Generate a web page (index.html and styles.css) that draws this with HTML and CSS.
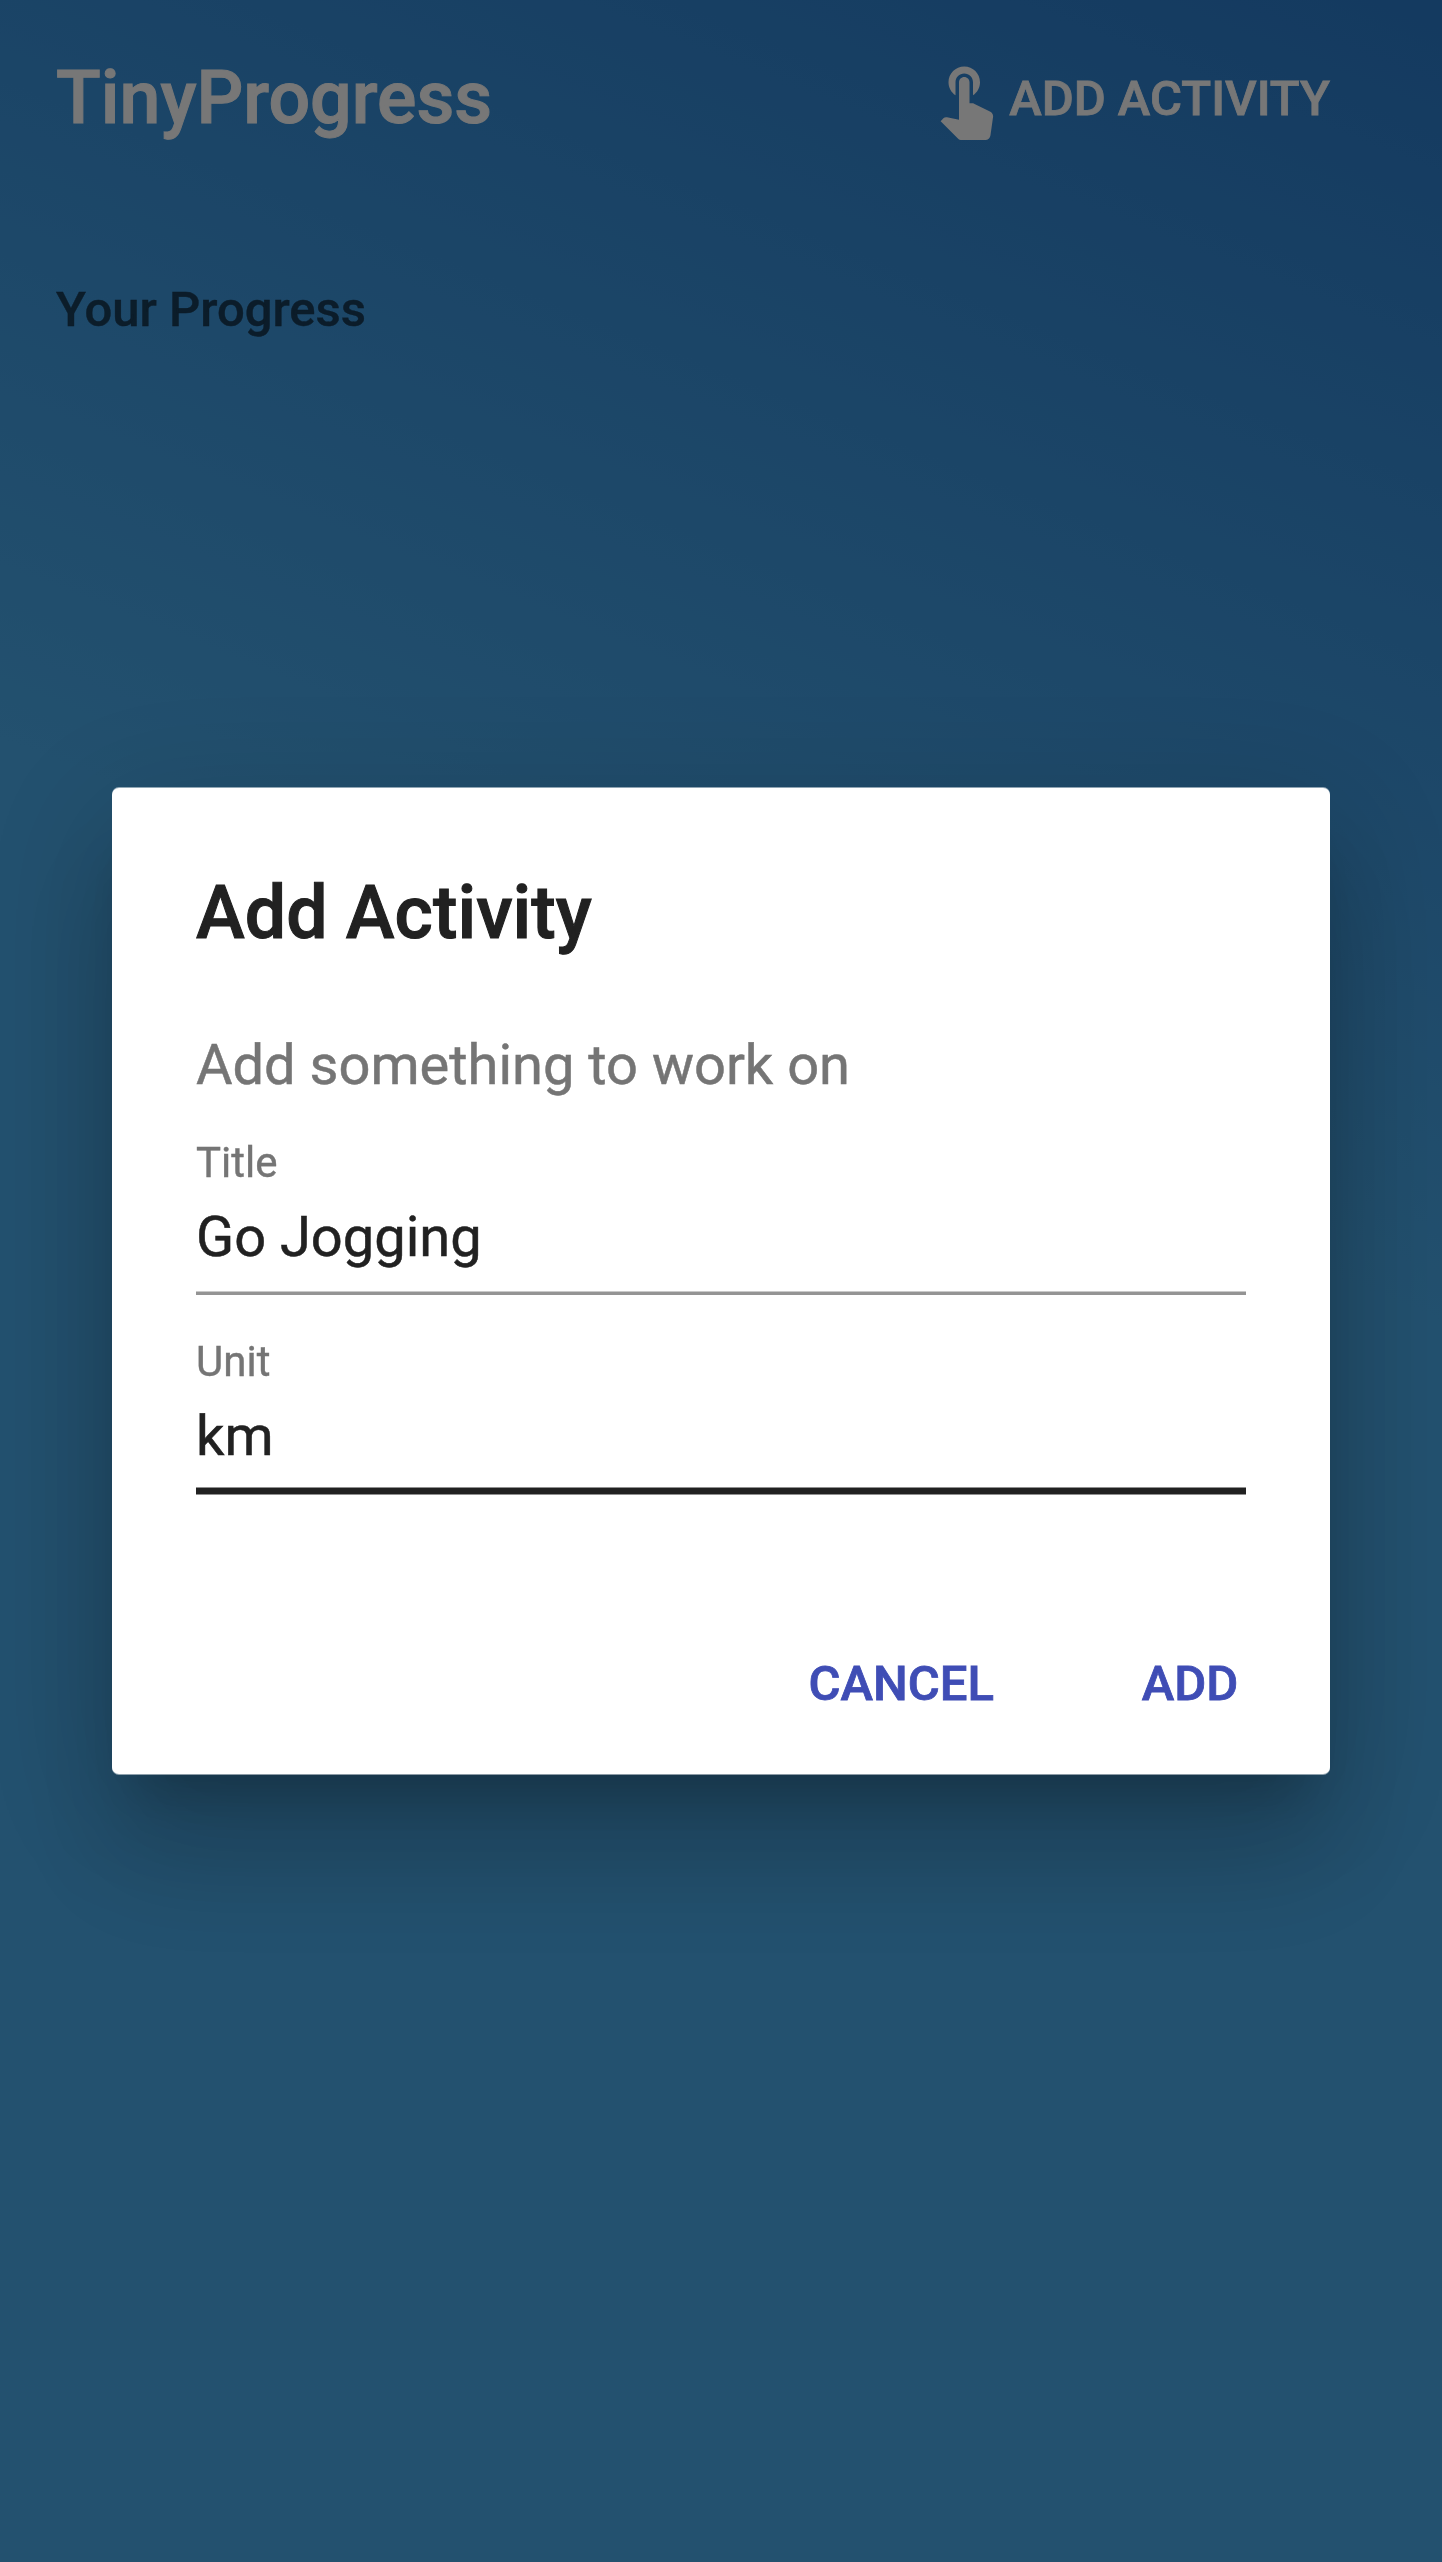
FILE: index.html
```html
<!DOCTYPE html>
<html lang="en">
<head>
<meta charset="utf-8">
<title>TinyProgress</title>
<link rel="stylesheet" href="styles.css">
</head>
<body>
<div class="app">
  <header class="app-bar">
    <h1 class="brand">TinyProgress</h1>
    <button class="button button-light" type="button">
      <svg class="icon" viewBox="0 0 24 24" aria-hidden="true"><path d="M9 11.24V7.5C9 6.12 10.12 5 11.5 5S14 6.12 14 7.5v3.74c1.21-.81 2-2.18 2-3.74C16 5.01 13.99 3 11.5 3S7 5.01 7 7.5c0 1.56.79 2.93 2 3.74zm9.84 4.63l-4.54-2.26c-.17-.07-.35-.11-.54-.11H13v-6c0-.83-.67-1.5-1.5-1.5S10 6.67 10 7.5v10.74l-3.43-.72c-.08-.01-.15-.03-.24-.03-.31 0-.59.13-.79.33l-.79.8 4.94 4.94c.27.27.65.44 1.06.44h6.79c.75 0 1.33-.55 1.44-1.28l.75-5.27c.01-.07.02-.14.02-.2 0-.62-.38-1.16-.91-1.38z"/></svg>
      Add Activity
    </button>
  </header>
  <h2 class="subheader">Your Progress</h2>
</div>
<div class="backdrop">
  <section class="dialog" role="dialog" aria-labelledby="dialog-title">
    <h2 class="dialog-title" id="dialog-title">Add Activity</h2>
    <p class="dialog-text">Add something to work on</p>
    <div class="fields">
      <div class="field">
        <label class="label" for="title">Title</label>
        <input class="input" id="title" type="text" value="Go Jogging">
        <div class="underline"></div>
      </div>
      <div class="field">
        <label class="label" for="unit">Unit</label>
        <input class="input" id="unit" type="text" value="km">
        <div class="underline underline-focused"></div>
      </div>
    </div>
    <div class="actions">
      <button class="button button-primary" type="button">Cancel</button>
      <button class="button button-primary" type="button">Add</button>
    </div>
  </section>
</div>
</body>
</html>
```
FILE: styles.css
```css
* { box-sizing: border-box; }

body {
  margin: 0;
  font-family: Roboto, "Liberation Sans", sans-serif;
  overflow: hidden;
}

h1, h2, p { margin: 0; }

.app {
  height: 2562px;
  background: linear-gradient(202deg, #2874c0 0%, #46a2de 42%, #46a2de 100%);
}

.app-bar {
  display: flex;
  align-items: center;
  justify-content: space-between;
  height: 196px;
  padding: 0 56px;
}

.brand {
  color: #eee;
  font-size: 73.5px;
  font-weight: 500;
  line-height: 86px;
  -webkit-text-stroke: 1px currentColor;
}

.button {
  display: flex;
  align-items: center;
  justify-content: center;
  min-width: 224px;
  height: 126px;
  padding: 3px 56px 0;
  border: 0;
  background: none;
  font: 500 49px/1.4 Roboto, "Liberation Sans", sans-serif;
  text-transform: uppercase;
  white-space: nowrap;
  -webkit-text-stroke: 0.8px currentColor;
}

.button-light { color: #eee; }
.button-primary { color: #3f4db5; }

.icon {
  width: 84px;
  height: 84px;
  margin: -3px 1px 0 0;
  fill: currentColor;
}

.subheader {
  padding: 0 56px;
  color: rgba(0, 0, 0, 0.6);
  font-size: 49px;
  font-weight: 500;
  line-height: 168px;
  margin-top: 30px;
  -webkit-text-stroke: 0.4px #16334a;
}

.backdrop {
  position: fixed;
  inset: 0;
  display: flex;
  align-items: center;
  justify-content: center;
  background: rgba(0, 0, 0, 0.5);
}

.dialog {
  display: flex;
  flex-direction: column;
  width: 1218px;
  height: 986px;
  padding: 83px 84px 0;
  border-radius: 7px;
  background: #fff;
  color: #212121;
  box-shadow:
    0 -1px 0 rgba(255, 255, 255, 0.5),
    0 1px 0 rgba(255, 255, 255, 0.5),
    0 38.5px 52.5px -24.5px rgba(0, 0, 0, 0.2),
    0 84px 115px 6px rgba(0, 0, 0, 0.14),
    0 31.5px 135px 20px rgba(0, 0, 0, 0.13);
}

.dialog-title {
  font-size: 73.5px;
  font-weight: 500;
  line-height: 84px;
  -webkit-text-stroke: 1px currentColor;
}

.dialog-text {
  margin-top: 72px;
  color: #757575;
  font-size: 56px;
  line-height: 77px;
  -webkit-text-stroke: 0.5px currentColor;
}

.fields {
  display: flex;
  flex-direction: column;
  gap: 46px;
  margin-top: 38px;
}

.field {
  display: flex;
  flex-direction: column;
}

.label {
  color: #757575;
  font-size: 42px;
  line-height: 42px;
  -webkit-text-stroke: 0.4px currentColor;
}

.input {
  height: 66px;
  margin-top: 20px;
  padding: 0;
  border: 0;
  outline: 0;
  background: none;
  color: inherit;
  font: 400 56px/66px Roboto, "Liberation Sans", sans-serif;
  -webkit-text-stroke: 0.5px currentColor;
}

.underline {
  height: 4px;
  margin-top: 21px;
  background: linear-gradient(rgba(0, 0, 0, 0.21) 1px, rgba(0, 0, 0, 0.42) 1px);
}

.underline-focused {
  height: 8px;
  margin-top: 18px;
  background: linear-gradient(#909090 1px, #212121 1px 7px, #909090 7px);
}

.actions {
  display: flex;
  gap: 28px;
  justify-content: flex-end;
  margin: auto -56px 28px 0;
}
```
